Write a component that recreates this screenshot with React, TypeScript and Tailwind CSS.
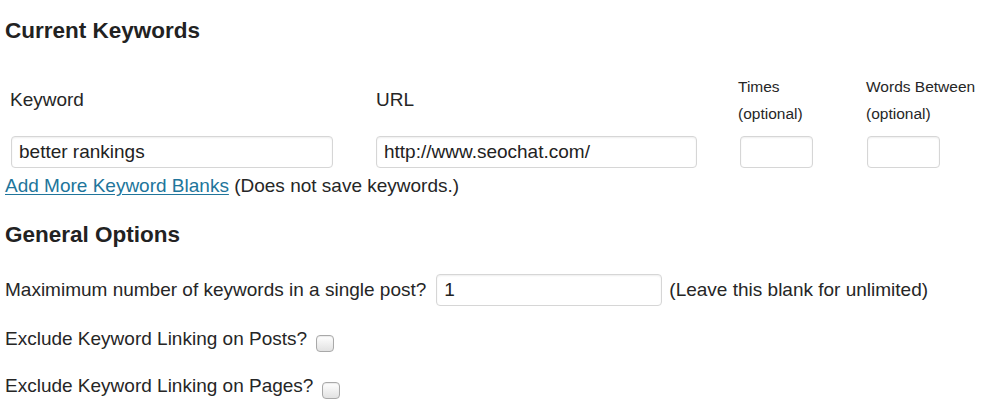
import React from "react";

const inputCls =
  "h-[32px] border border-[#d6d6d6] rounded-[4px] bg-white px-[7px] text-[19px] text-[#222] shadow-[inset_0_1px_2px_rgba(0,0,0,0.07)] outline-none";

function Checkbox({ className }: { className?: string }) {
  return (
    <span
      className={
        "inline-block w-[18px] h-[17px] rounded-[4px] border border-[#a9a9a9] bg-gradient-to-b from-[#ffffff] to-[#e2e2e2] shadow-[inset_0_1px_1px_rgba(0,0,0,0.08)] " +
        (className ?? "")
      }
    />
  );
}

export default function App() {
  return (
    <div
      className="w-[1008px] h-[402px] bg-white text-[#262626] overflow-hidden"
      style={{ fontFamily: '"Liberation Sans", Arial, Helvetica, sans-serif' }}
    >
      <div className="pl-[5px]">
        <h2 className="pt-[18px] text-[22.5px] leading-[26px] font-bold text-[#222]">
          Current Keywords
        </h2>

        {/* labels row */}
        <div className="mt-[29px] h-[54px] flex items-center pl-[5px]">
          <div className="w-[366px] text-[19px] leading-[22px]">Keyword</div>
          <div className="w-[362px] text-[19px] leading-[22px]">URL</div>
          <div className="w-[128px] text-[15.5px] leading-[27px]">
            <div>Times</div>
            <div>(optional)</div>
          </div>
          <div className="text-[15.5px] leading-[27px]">
            <div>Words Between</div>
            <div>(optional)</div>
          </div>
        </div>

        {/* inputs row */}
        <div className="mt-[9px] flex pl-[6px]">
          <input className={inputCls + " w-[322px]"} defaultValue="better rankings" />
          <input className={inputCls + " w-[321px] ml-[43px]"} defaultValue="http://www.seochat.com/" />
          <input className={inputCls + " w-[73px] ml-[43px]"} defaultValue="" />
          <input className={inputCls + " w-[73px] ml-[54px]"} defaultValue="" />
        </div>

        <div className="mt-[7px] text-[19px] leading-[22px]">
          <a className="text-[#21759b] underline underline-offset-[2px]" href="#">
            Add More Keyword Blanks
          </a>{" "}
          (Does not save keywords.)
        </div>

        <h2 className="mt-[25px] text-[22.5px] leading-[26px] font-bold text-[#222]">
          General Options
        </h2>

        <div className="mt-[26px] h-[32px] flex items-center text-[19px] leading-[22px]">
          <span>Maximimum number of keywords in a single post?</span>
          <input className={inputCls + " w-[226px] ml-[10px]"} defaultValue="1" />
          <span className="ml-[7px]">(Leave this blank for unlimited)</span>
        </div>

        <div className="mt-[22px] flex items-start text-[19px] leading-[22px]">
          <span>Exclude Keyword Linking on Posts?</span>
          <Checkbox className="ml-[9px] mt-[7px]" />
        </div>

        <div className="mt-[23px] flex items-start text-[19px] leading-[22px]">
          <span>Exclude Keyword Linking on Pages?</span>
          <Checkbox className="ml-[9px] mt-[7px]" />
        </div>
      </div>
    </div>
  );
}
